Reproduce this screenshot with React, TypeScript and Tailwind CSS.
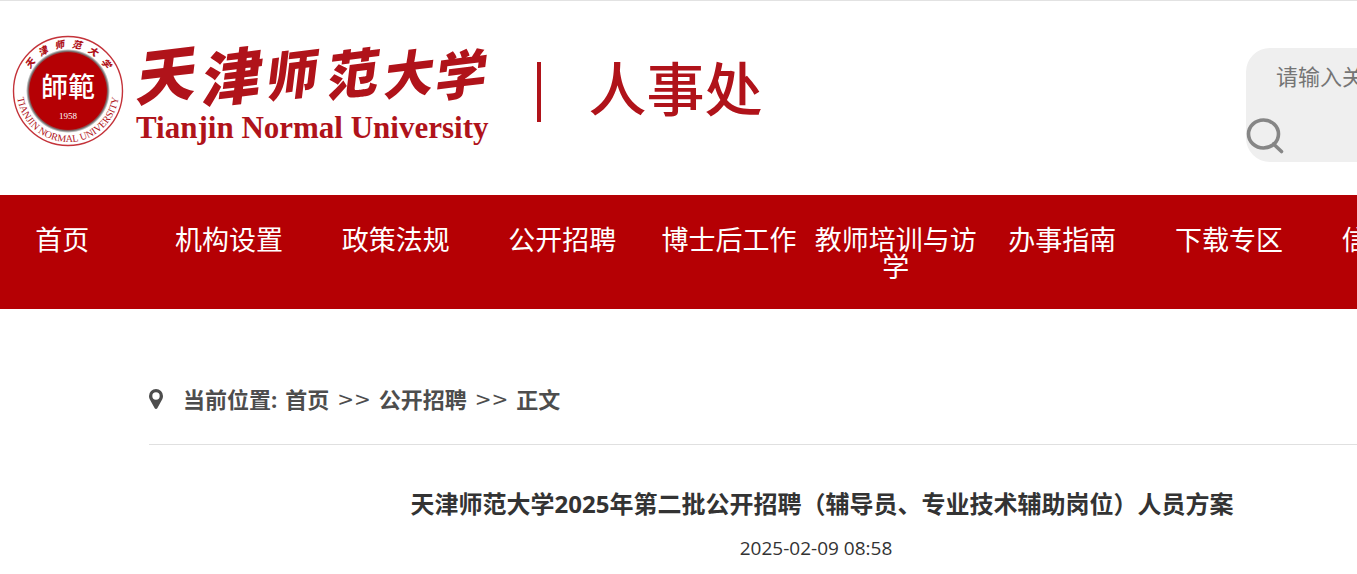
import type { FC } from "react";

const NAV_ITEMS = [
  "首页",
  "机构设置",
  "政策法规",
  "公开招聘",
  "博士后工作",
  "教师培训与访学",
  "办事指南",
  "下载专区",
  "信息公开",
];

// brush lettering is uneven, so each character has its own centre and size
const WORDMARK = [
  { char: "天", x: 26, y: 63, size: 60 },
  { char: "津", x: 91, y: 65, size: 60 },
  { char: "师", x: 152, y: 60, size: 52 },
  { char: "范", x: 213, y: 59, size: 52 },
  { char: "大", x: 269, y: 58, size: 50 },
  { char: "学", x: 321, y: 60, size: 52 },
];

const Seal: FC = () => (
  <svg viewBox="0 0 112 112" className="h-28 w-28 shrink-0" role="img" aria-label="校徽">
    <defs>
      <path id="seal-top" d="M12.5 56 A43.5 43.5 0 0 1 99.5 56" />
      <path id="seal-bottom" d="M6 46 A51 51 0 1 0 106 46" />
      <radialGradient id="seal-edge">
        <stop offset="91%" stopColor="#b50004" />
        <stop offset="95%" stopColor="#777777" />
        <stop offset="100%" stopColor="#ffffff" />
      </radialGradient>
    </defs>
    <circle cx="56" cy="56" r="54.5" fill="#fff" stroke="#c4333a" strokeWidth="1.4" />
    <circle cx="56" cy="56" r="42" fill="url(#seal-edge)" />
    <circle cx="56" cy="56" r="38.5" fill="#b50004" />
    <g fill="#b0131a" textAnchor="middle">
      <text fontSize="9.5" fontWeight="900" fontStyle="italic" fontFamily="'Noto Sans CJK SC', sans-serif">
        {["天", "津", "师", "范", "大", "学"].map((char, i) => (
          <textPath key={char} href="#seal-top" startOffset={`${20 + i * 12}%`}>
            {char}
          </textPath>
        ))}
      </text>
      <text fontSize="10" fontFamily="'Liberation Serif', serif">
        <textPath href="#seal-bottom" startOffset="50%">
          TIANJIN NORMAL UNIVERSITY
        </textPath>
      </text>
    </g>
    <g fill="#fff" textAnchor="middle">
      <text x="56" y="62" fontSize="27" fontWeight="500" fontFamily="'Noto Sans CJK TC', sans-serif">
        師範
      </text>
      <text x="56" y="84" fontSize="9" fontFamily="'Liberation Serif', serif">
        1958
      </text>
    </g>
  </svg>
);

const Wordmark: FC = () => (
  <svg viewBox="0 0 350 77" className="h-[77px] w-[350px] overflow-visible" fill="currentColor">
    {WORDMARK.map(({ char, x, y, size }) => (
      <text
        key={char}
        x={x}
        y={y}
        fontSize={size}
        fontWeight="900"
        fontStyle="italic"
        textAnchor="middle"
        fontFamily="'Noto Sans CJK SC', sans-serif"
        transform={`rotate(-7 ${x} 40)`}
      >
        {char}
      </text>
    ))}
  </svg>
);

const SearchIcon: FC = () => (
  <svg viewBox="0 0 38 38" className="h-[38px] w-[38px]" fill="none" stroke="#868686" strokeWidth="3.6">
    <ellipse cx="17.5" cy="16" rx="15" ry="14" />
    <path d="M27.5 26 35.500 33.500" strokeLinecap="round" />
  </svg>
);

const PinIcon: FC = () => (
  <svg viewBox="0 0 14 20" className="h-5 w-3.5" fill="#4d4d4d">
    <path
      fillRule="evenodd"
      d="M7 0a7 7 0 0 1 7 7c0 1.200-.2 2.100-.6 3L8.300 19.200a1.500 1.500 0 0 1-2.600 0L.6 10C.2 9.100 0 8.200 0 7a7 7 0 0 1 7-7Zm0 3.300a3.700 3.700 0 1 0 0 7.400 3.700 3.700 0 0 0 0-7.400Z"
    />
  </svg>
);

const Separator: FC = () => (
  <span className="font-['DejaVu_Sans'] text-xl leading-6 font-normal" aria-hidden="true">
    &gt;&gt;
  </span>
);

const Header: FC = () => (
  <header className="flex items-start border-t border-[#e2e2e2] pb-[33px]">
    <a href="#" className="flex shrink-0 items-start pt-[34px] pl-3 text-[#b0131a]">
      <Seal />
      <div className="ml-3">
        <Wordmark />
        <div className="font-['Liberation_Serif',serif] text-[31px] leading-8 font-bold whitespace-nowrap">
          Tianjin Normal University
        </div>
      </div>
      <div className="mt-[27px] ml-12 h-[60px] w-1 bg-current" />
      <div className="mt-[17px] ml-12 font-['Noto_Sans_CJK_SC',sans-serif] text-[58px] leading-[68px] font-medium">
        人事处
      </div>
    </a>
    <form
      className="mt-[47px] -mr-36 ml-auto h-[114px] w-[255px] shrink-0 rounded-3xl bg-[#efefef]"
      onSubmit={(e) => e.preventDefault()}
    >
      <input
        type="text"
        aria-label="请输入关键字"
        placeholder="请输入关键字"
        className="block h-14 w-full bg-transparent pl-[30px] text-[22px] outline-none placeholder:text-[#757575]"
      />
      <button type="submit" aria-label="搜索" className="mt-3.5 block">
        <SearchIcon />
      </button>
    </form>
  </header>
);

const NavBar: FC = () => (
  <nav className="bg-[#b50004] pt-[31px] pb-[29px]">
    <ul className="-ml-[21px] grid w-[1500px] grid-cols-9">
      {NAV_ITEMS.map((item) => (
        <li key={item} className="text-center text-[27px] leading-[27px] text-white">
          <a href="#" className="block">
            {item}
          </a>
        </li>
      ))}
    </ul>
  </nav>
);

export default function App() {
  return (
    <div className="min-h-screen overflow-hidden bg-white font-['Open_Sans','Noto_Sans_CJK_SC',sans-serif]">
      <Header />
      <NavBar />
      <main className="-mr-[138px] ml-[149px]">
        <div className="flex items-center gap-2 border-b border-[#e0e0e0] pt-[74px] pb-[29px] text-[22px] leading-8 font-bold text-[#4d4d4d]">
          <PinIcon />
          <span className="ml-3">当前位置:</span>
          <a href="#">首页</a>
          <Separator />
          <a href="#">公开招聘</a>
          <Separator />
          <span>正文</span>
        </div>
        <article className="text-center text-[#333]">
          <h1 className="mt-[39px] text-2xl leading-10 font-bold">
            天津师范大学2025年第二批公开招聘（辅导员、专业技术辅助岗位）人员方案
          </h1>
          <p className="mt-2 pr-3 text-[19px] leading-8">2025-02-09 08:58</p>
        </article>
      </main>
    </div>
  );
}
